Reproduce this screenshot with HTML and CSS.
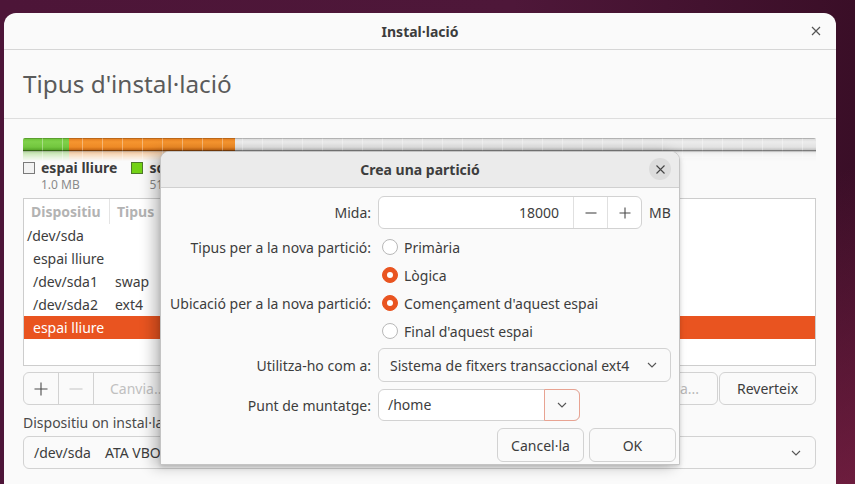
FILE: index.html
```html
<!DOCTYPE html>
<html lang="ca">
<head>
<meta charset="utf-8">
<title>Instal·lació</title>
<link rel="stylesheet" href="styles.css">
</head>
<body>
<div class="window">
  <div class="titlebar">
    <span class="title">Instal·lació</span>
    <span class="wclose"><svg width="10" height="10" viewBox="0 0 10 10"><path d="M1 1L9 9M9 1L1 9" stroke="#555" stroke-width="1.2" fill="none"/></svg></span>
  </div>
  <div class="header"><h1>Tipus d'instal·lació</h1></div>
  <div class="content">
    <div class="pbar">
      <div class="seg green" style="width:46px"></div>
      <div class="seg orange" style="width:166px"></div>
      <div class="seg grey"></div>
    </div>
    <div class="pbar reflect">
      <div class="seg green" style="width:46px"></div>
      <div class="seg orange" style="width:166px"></div>
      <div class="seg grey"></div>
    </div>
    <div class="legend">
      <div class="litem">
        <span class="swatch free"></span>
        <div class="ltext"><div class="lname">espai lliure</div><div class="lsize">1.0 MB</div></div>
      </div>
      <div class="litem">
        <span class="swatch swap"></span>
        <div class="ltext"><div class="lname">sda1</div><div class="lsize">510 MB</div></div>
      </div>
    </div>
    <div class="table">
      <div class="thead">
        <div class="th c1">Dispositiu</div>
        <div class="th c2">Tipus</div>
      </div>
      <div class="tr"><span class="c1">/dev/sda</span></div>
      <div class="tr"><span class="c1 ind">espai lliure</span></div>
      <div class="tr"><span class="c1 ind">/dev/sda1</span><span class="c2">swap</span></div>
      <div class="tr"><span class="c1 ind">/dev/sda2</span><span class="c2">ext4</span></div>
      <div class="tr sel"><span class="c1 ind">espai lliure</span></div>
    </div>
    <div class="toolbar">
      <div class="group">
        <span class="tbtn icon"><svg width="14" height="14" viewBox="0 0 14 14"><path d="M7 0.5V13.5M0.5 7H13.5" stroke="#4a4a4a" stroke-width="1.1" fill="none"/></svg></span>
        <span class="tbtn icon"><svg width="14" height="14" viewBox="0 0 14 14"><path d="M0.5 7H13.5" stroke="#c4c4c4" stroke-width="1.1" fill="none"/></svg></span>
        <span class="tbtn dis">Canvia...</span>
      </div>
      <span class="spacer"></span>
      <span class="btn newtable">Taula nova...</span>
      <span class="btn revert">Reverteix</span>
    </div>
    <div class="devlabel">Dispositiu on instal·lar el carregador</div>
    <div class="devcombo">
      <span class="dev">/dev/sda</span><span class="devname">ATA VBOX</span>
      <span class="chev"><svg width="10" height="6" viewBox="0 0 10 6"><path d="M1 1L5 5L9 1" stroke="#555" stroke-width="1.1" fill="none"/></svg></span>
    </div>
  </div>
</div>

<div class="dialog">
  <div class="dhead">
    <span class="dtitle">Crea una partició</span>
    <span class="dclose"><svg width="9" height="9" viewBox="0 0 9 9"><path d="M0.5 0.5L8.5 8.5M8.5 0.5L0.5 8.5" stroke="#444" stroke-width="1.1" fill="none"/></svg></span>
  </div>
  <div class="form">
    <div class="lbl h33">Mida:</div>
    <div class="ctl spinrow">
      <div class="spin">
        <span class="sval">18000</span>
        <span class="sbtn"><svg width="12" height="12" viewBox="0 0 12 12"><path d="M0.5 6H11.5" stroke="#4a4a4a" stroke-width="1.1" fill="none"/></svg></span>
        <span class="sbtn"><svg width="12" height="12" viewBox="0 0 12 12"><path d="M6 0.5V11.5M0.5 6H11.5" stroke="#4a4a4a" stroke-width="1.1" fill="none"/></svg></span>
      </div>
      <span class="unit">MB</span>
    </div>

    <div class="lbl h28">Tipus per a la nova partició:</div>
    <div class="ctl radio"><span class="rb"></span>Primària</div>

    <div class="lbl h28"></div>
    <div class="ctl radio"><span class="rb on"></span>Lògica</div>

    <div class="lbl h28">Ubicació per a la nova partició:</div>
    <div class="ctl radio"><span class="rb on"></span>Començament d'aquest espai</div>

    <div class="lbl h28"></div>
    <div class="ctl radio"><span class="rb"></span>Final d'aquest espai</div>

    <div class="lbl h34">Utilitza-ho com a:</div>
    <div class="ctl">
      <div class="combo">
        <span>Sistema de fitxers transaccional ext4</span>
        <svg width="10" height="6" viewBox="0 0 10 6"><path d="M1 1L5 5L9 1" stroke="#555" stroke-width="1.1" fill="none"/></svg>
      </div>
    </div>

    <div class="lbl h32">Punt de muntatge:</div>
    <div class="ctl">
      <div class="entry">
        <span class="etext">/home</span>
        <span class="ebtn"><svg width="10" height="6" viewBox="0 0 10 6"><path d="M1 1L5 5L9 1" stroke="#555" stroke-width="1.1" fill="none"/></svg></span>
      </div>
    </div>
  </div>
  <div class="actions">
    <span class="btn dbtn">Cancel·la</span>
    <span class="btn dbtn">OK</span>
  </div>
</div>
</body>
</html>
```

FILE: styles.css
```css
* { box-sizing: border-box; }

html, body {
  margin: 0;
  height: 100%;
  overflow: hidden;
}

body {
  font-family: "Noto Sans", "Open Sans", sans-serif;
  font-size: 14px;
  font-feature-settings: "locl" 0;
  color: #3d3d3d;
  background:
    linear-gradient(160deg, rgba(0,0,0,0) 60%, rgba(150,40,80,0.55) 100%),
    linear-gradient(90deg, #4d1538 0%, #4e1739 60%, #3a0e27 100%);
  padding: 13px 19px 0 4px;
  position: relative;
}

.window {
  background: #fafafa;
  border-radius: 12px 12px 0 0;
  height: 480px;
  overflow: hidden;
}

.titlebar {
  height: 37px;
  border-bottom: 1px solid #d6d6d6;
  display: flex;
  align-items: center;
  justify-content: center;
  position: relative;
}

.title {
  font-weight: bold;
  font-size: 14px;
  color: #3d3d3d;
}

.wclose {
  position: absolute;
  right: 15px;
  top: 13px;
  display: flex;
}

.header {
  height: 69px;
  border-bottom: 1px solid #dedede;
  padding-left: 19px;
  display: flex;
  align-items: center;
}

.header h1 {
  margin: 0;
  font-weight: normal;
  font-size: 24.3px;
  color: #5b5b5b;
  margin-top: -2px;
}

.content {
  padding: 19px 20px 0 19px;
}

/* partition bar */
.pbar {
  display: flex;
  height: 13px;
  position: relative;
  border-radius: 2px 2px 0 0;
  overflow: hidden;
}

.pbar::after {
  content: "";
  position: absolute;
  inset: 0;
  background: repeating-linear-gradient(to right, transparent 0 19px, rgba(255,255,255,0.35) 19px 20px);
  border-top: 1px solid rgba(0,0,0,0.18);
  border-bottom: 1px solid rgba(0,0,0,0.35);
}

.seg { height: 100%; }
.seg.grey { flex: 1; }
.seg.green { background: linear-gradient(#6cc136, #7fd14a 30%, #72c63e 70%, #4d9a20); }
.seg.orange { background: linear-gradient(#e27a1c, #f5952f 30%, #ee8a26 70%, #b65a0c); }
.seg.grey { background: linear-gradient(#d6d6d6, #ececec 30%, #e2e2e2 70%, #b8b8b8); }

.pbar.reflect {
  height: 10px;
  transform: scaleY(-1);
  opacity: 0.45;
  border-radius: 0;
  -webkit-mask-image: linear-gradient(to bottom, transparent, #000);
  mask-image: linear-gradient(to bottom, transparent, #000);
}

/* legend */
.legend {
  display: flex;
  gap: 14px;
  height: 37px;
}

.litem {
  display: flex;
  gap: 6px;
  align-items: flex-start;
}

.swatch {
  width: 12px;
  height: 12px;
  margin-top: 1px;
  border: 1px solid #7a7a7a;
  flex: none;
}
.swatch.free { background: #f2f2f2; }
.swatch.swap { background: #73d216; border-color: #4e7a2a; }

.lname {
  font-weight: bold;
  font-size: 14px;
  line-height: 14px;
  color: #3d3d3d;
}

.lsize {
  font-size: 12px;
  line-height: 13px;
  margin-top: 3px;
  color: #8a8a8a;
}

/* table */
.table {
  height: 168px;
  border: 1px solid #cdcdcd;
  background: #ffffff;
}

.thead {
  height: 25px;
  display: flex;
  align-items: center;
  color: #b3b3b3;
  font-weight: bold;
}

.th { padding-left: 7px; }
.th.c1 { width: 86px; border-right: 1px solid #e4e4e4; height: 25px; line-height: 25px; }
.th.c2 { width: 140px; }

.tr {
  height: 23px;
  display: flex;
  align-items: center;
}

.tr .c1 { width: 91px; padding-left: 3px; }
.tr .c1.ind { padding-left: 9px; }

.tr.sel {
  background: #e95420;
  color: #ffffff;
}

/* toolbar */
.toolbar {
  display: flex;
  margin-top: 6px;
  height: 33px;
}

.group {
  display: flex;
  border: 1px solid #d2d2d2;
  border-radius: 6px;
  overflow: hidden;
}

.tbtn {
  display: flex;
  align-items: center;
  justify-content: center;
  height: 100%;
}
.tbtn.icon {
  width: 35px;
  border-right: 1px solid #d2d2d2;
}
.tbtn.dis {
  color: #c0c0c0;
  padding: 0 16px;
  width: 110px;
  justify-content: flex-start;
}

.spacer { flex: 1; }

.btn {
  display: flex;
  align-items: center;
  justify-content: center;
  border: 1px solid #d2d2d2;
  border-radius: 6px;
  background: #fafafa;
  color: #3d3d3d;
}
.newtable { padding: 0 18px 0 16px; color: #b8b8b8; margin-right: 1px; }
.revert { width: 97px; }

.devlabel {
  margin-top: 7px;
  height: 22px;
  line-height: 22px;
  color: #4a4a4a;
}

.devcombo {
  margin-top: 2px;
  height: 33px;
  border: 1px solid #d2d2d2;
  border-radius: 6px;
  display: flex;
  align-items: center;
  padding-left: 10px;
  padding-right: 14px;
}
.devname { margin-left: 14px; flex: 1; }
.chev { display: flex; }

/* dialog */
.dialog {
  position: absolute;
  left: 160px;
  top: 151px;
  width: 520px;
  height: 314px;
  background: #fafafa;
  border-radius: 9px 9px 0 0;
  border: 1px solid #c4c4c4;
  box-shadow: -7px 2px 14px rgba(0,0,0,0.24), 0 2px 4px rgba(0,0,0,0.15);
}

.dhead {
  height: 36px;
  background: #ebebeb;
  border-bottom: 1px solid #d0d0d0;
  border-radius: 8px 8px 0 0;
  display: flex;
  align-items: center;
  justify-content: center;
  position: relative;
}

.dtitle {
  font-weight: bold;
  color: #3d3d3d;
}

.dclose {
  position: absolute;
  right: 8px;
  top: 6px;
  width: 22px;
  height: 22px;
  border-radius: 50%;
  background: #dcdcdc;
  display: flex;
  align-items: center;
  justify-content: center;
}

.form {
  display: grid;
  grid-template-columns: 210px 1fr;
  grid-template-rows: 41px 32px 28px 28px 28px 37px 39px;
  column-gap: 7px;
}

.lbl {
  align-self: end;
  display: flex;
  align-items: center;
  justify-content: flex-end;
  white-space: nowrap;
}
.h33 { height: 33px; }
.h28 { height: 28px; }
.h34 { height: 34px; }
.h32 { height: 32px; }

.ctl { align-self: end; }

.spinrow {
  display: flex;
  align-items: center;
  gap: 7px;
}

.spin {
  width: 264px;
  height: 33px;
  border: 1px solid #d2d2d2;
  border-radius: 6px;
  background: #ffffff;
  display: flex;
}

.sval {
  flex: 1;
  text-align: right;
  padding-right: 14px;
  line-height: 31px;
}

.sbtn {
  width: 34px;
  border-left: 1px solid #e0e0e0;
  display: flex;
  align-items: center;
  justify-content: center;
}

.radio {
  height: 28px;
  display: flex;
  align-items: center;
  gap: 6px;
  padding-left: 4px;
}

.rb {
  width: 16px;
  height: 16px;
  border-radius: 50%;
  border: 1px solid #b8b8b8;
  background: #ffffff;
  position: relative;
  flex: none;
}

.rb.on {
  background: #e95420;
  border-color: #e95420;
}

.rb.on::after {
  content: "";
  position: absolute;
  left: 4px;
  top: 4px;
  width: 6px;
  height: 6px;
  border-radius: 50%;
  background: #ffffff;
}

.combo {
  width: 293px;
  height: 34px;
  border: 1px solid #d2d2d2;
  border-radius: 6px;
  background: #fafafa;
  display: flex;
  align-items: center;
  justify-content: space-between;
  padding: 0 13px 0 11px;
}

.entry {
  width: 202px;
  height: 32px;
  border: 1px solid #d2d2d2;
  border-radius: 6px;
  background: #ffffff;
  display: flex;
}

.etext {
  flex: 1;
  padding-left: 9px;
  line-height: 30px;
}

.ebtn {
  width: 36px;
  margin: -1px -1px -1px 0;
  border: 1px solid #e8a392;
  border-radius: 0 6px 6px 0;
  background: #fafafa;
  display: flex;
  align-items: center;
  justify-content: center;
}

.actions {
  display: flex;
  justify-content: flex-end;
  gap: 5px;
  margin-top: 7px;
  padding-right: 3px;
}

.dbtn {
  width: 87px;
  height: 34px;
}
```
